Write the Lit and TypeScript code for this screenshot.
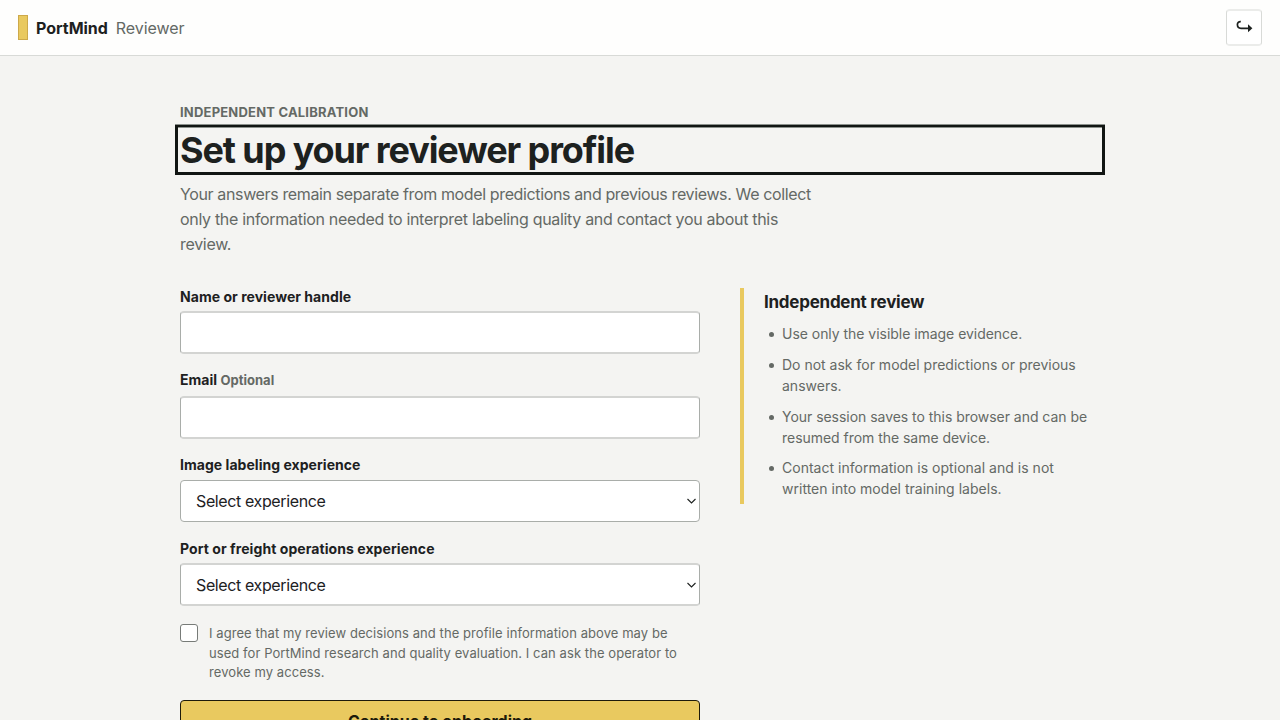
import { LitElement, html, css } from "lit";
import { customElement } from "lit/decorators.js";

@customElement("app-root")
export class AppRoot extends LitElement {
  static styles = css`
    :host {
      display: block;
      height: 720px;
      overflow: hidden;
      background: #f4f4f2;
      color: #1d211f;
      font-family: Inter, "Liberation Sans", sans-serif;
      font-size: 16px;
    }
    * { box-sizing: border-box; }
    h1, h2, p, ul { margin: 0; padding: 0; }
    .bar {
      height: 56px;
      display: flex;
      align-items: center;
      padding: 0 18px;
      background: #fefefd;
      border-bottom: 1px solid #d8dad7;
    }
    .mark { width: 10px; height: 25px; background: #e9c95f; border: 1px solid #cda94a; }
    .name { margin-left: 8px; font-weight: 700; letter-spacing: -0.03px; }
    .role { margin-left: 8px; color: #646965; letter-spacing: -0.08px; }
    .exit {
      width: 36px; height: 37px; margin-left: auto; padding: 0;
      display: grid; place-items: center;
      background: #fff; border: 1px solid #d8dad7; border-top: 2px solid #ebecea; border-bottom: 2px solid #ebecea;
      border-radius: 4px; color: #1d211f;
    }
    .main { width: 920px; margin: 0 auto; padding-top: 46px; }
    .eyebrow { height: 20px; line-height: 20px; font-size: 13px; font-weight: 700; color: #646965; letter-spacing: 0.2px; }
    .title {
      margin: 3px -5px 0; height: 50px; padding-left: 2px;
      border: 3px solid #111513; border-top-width: 2px;
      box-shadow: 0 -1px 0 #8b908c, inset 0 1px 0 #8b908c;
      font-size: 36px; line-height: 46px; font-weight: 700; letter-spacing: -1.1px; white-space: nowrap;
    }
    .intro { margin-top: 7px; line-height: 24.8px; color: #646965; white-space: nowrap; letter-spacing: -0.31px; }
    .first { letter-spacing: -0.37px; }
    .cols { display: grid; grid-template-columns: 520px 360px; gap: 40px; align-items: start; margin-top: 32px; }
    .form { display: flex; flex-direction: column; }
    .label { height: 17px; line-height: 17px; font-size: 14px; font-weight: 700; letter-spacing: 0.04px; white-space: nowrap; }
    .opt { font-size: 13px; font-weight: 650; color: #646965; letter-spacing: 0; }
    .field {
      display: flex; align-items: center; justify-content: space-between;
      width: 520px; height: 42px; padding: 0 2px 0 15px;
      background: #fff; border: 1px solid #a9ada9; border-radius: 4px;
      letter-spacing: -0.38px;
    }
    .soft { height: 43px; border-top: 2px solid #d3d4d2; border-bottom: 2px solid #d3d4d2; }
    .l1 { margin-bottom: 6px; }
    .l2 { margin: 17px 0 8px; }
    .l3 { margin: 17px 0 7px; }
    .l4 { margin: 18px 0 6px; letter-spacing: 0.07px; }
    .consent { display: flex; margin-top: 18px; gap: 11px; color: #646965; font-size: 13px; line-height: 19.5px; white-space: nowrap; letter-spacing: 0.07px; }
    .check { width: 18px; height: 18px; background: #fff; border: 1px solid #777b78; border-radius: 3px; }
    .submit {
      height: 42px; margin-top: 17px; background: #e9c95f; color: #1d1a0a;
      border: 1px solid #1d1a0a; border-radius: 4px;
      font: 700 16px/20px Inter, "Liberation Sans", sans-serif; letter-spacing: 0;
    }
    .aside { height: 216px; padding: 3px 0 0 20px; border-left: 4px solid #e9c95f; }
    .aside h2 { font-size: 17px; line-height: 22px; font-weight: 700; letter-spacing: -0.25px; }
    .list { list-style: none; margin-top: 11px; font-size: 14px; line-height: 20.7px; color: #646965; white-space: nowrap; }
    .item { display: flex; margin-bottom: 10.2px; }
    .item:nth-child(odd) { letter-spacing: -0.035px; }
    .item:nth-child(4) { letter-spacing: 0.02px; }
    .dot { width: 5px; height: 5px; border-radius: 50%; background: #646965; margin: 8px 8px 0 5px; }
  `;

  private chevron() {
    return html`<svg width="11" height="8" viewBox="0 0 11 8" fill="none" stroke="#1d211f" stroke-width="1.1"><path d="M1.5 2 5.5 6 9.5 2" /></svg>`;
  }

  render() {
    const notes = [
      html`<span>Use only the visible image evidence.</span>`,
      html`<span>Do not ask for model predictions or previous<br />answers.</span>`,
      html`<span>Your session saves to this browser and can be<br />resumed from the same device.</span>`,
      html`<span>Contact information is optional and is not<br />written into model training labels.</span>`,
    ];
    return html`
      <header class="bar">
        <span class="mark"></span><span class="name">PortMind</span><span class="role">Reviewer</span>
        <button class="exit" aria-label="Sign out">
          <svg width="18" height="17" viewBox="0 0 18 17"><path d="M5.8 2.6C3.6 2.4 2.4 4 2.4 5.6 2.4 7.9 4 9.3 6 9.3H14" fill="none" stroke="currentColor" stroke-width="1.7" /><path d="M13 5.3 17.4 9.3 13 13.3Z" fill="currentColor" /></svg>
        </button>
      </header>
      <main class="main">
        <p class="eyebrow">INDEPENDENT CALIBRATION</p>
        <h1 class="title">Set up your reviewer profile</h1>
        <p class="intro"><span class="first">Your answers remain separate from model predictions and previous reviews. We collect</span><br />only the information needed to interpret labeling quality and contact you about this<br />review.</p>
        <div class="cols">
          <div class="form">
            <div class="label l1">Name or reviewer handle</div>
            <div class="field soft"></div>
            <div class="label l2">Email <span class="opt">Optional</span></div>
            <div class="field soft"></div>
            <div class="label l3">Image labeling experience</div>
            <div class="field"><span>Select experience</span>${this.chevron()}</div>
            <div class="label l4">Port or freight operations experience</div>
            <div class="field soft"><span>Select experience</span>${this.chevron()}</div>
            <div class="consent">
              <span class="check"></span>
              <span>I agree that my review decisions and the profile information above may be<br />used for PortMind research and quality evaluation. I can ask the operator to<br />revoke my access.</span>
            </div>
            <button class="submit">Continue to onboarding</button>
          </div>
          <aside class="aside">
            <h2>Independent review</h2>
            <ul class="list">${notes.map((n) => html`<li class="item"><span class="dot"></span>${n}</li>`)}</ul>
          </aside>
        </div>
      </main>
    `;
  }
}
